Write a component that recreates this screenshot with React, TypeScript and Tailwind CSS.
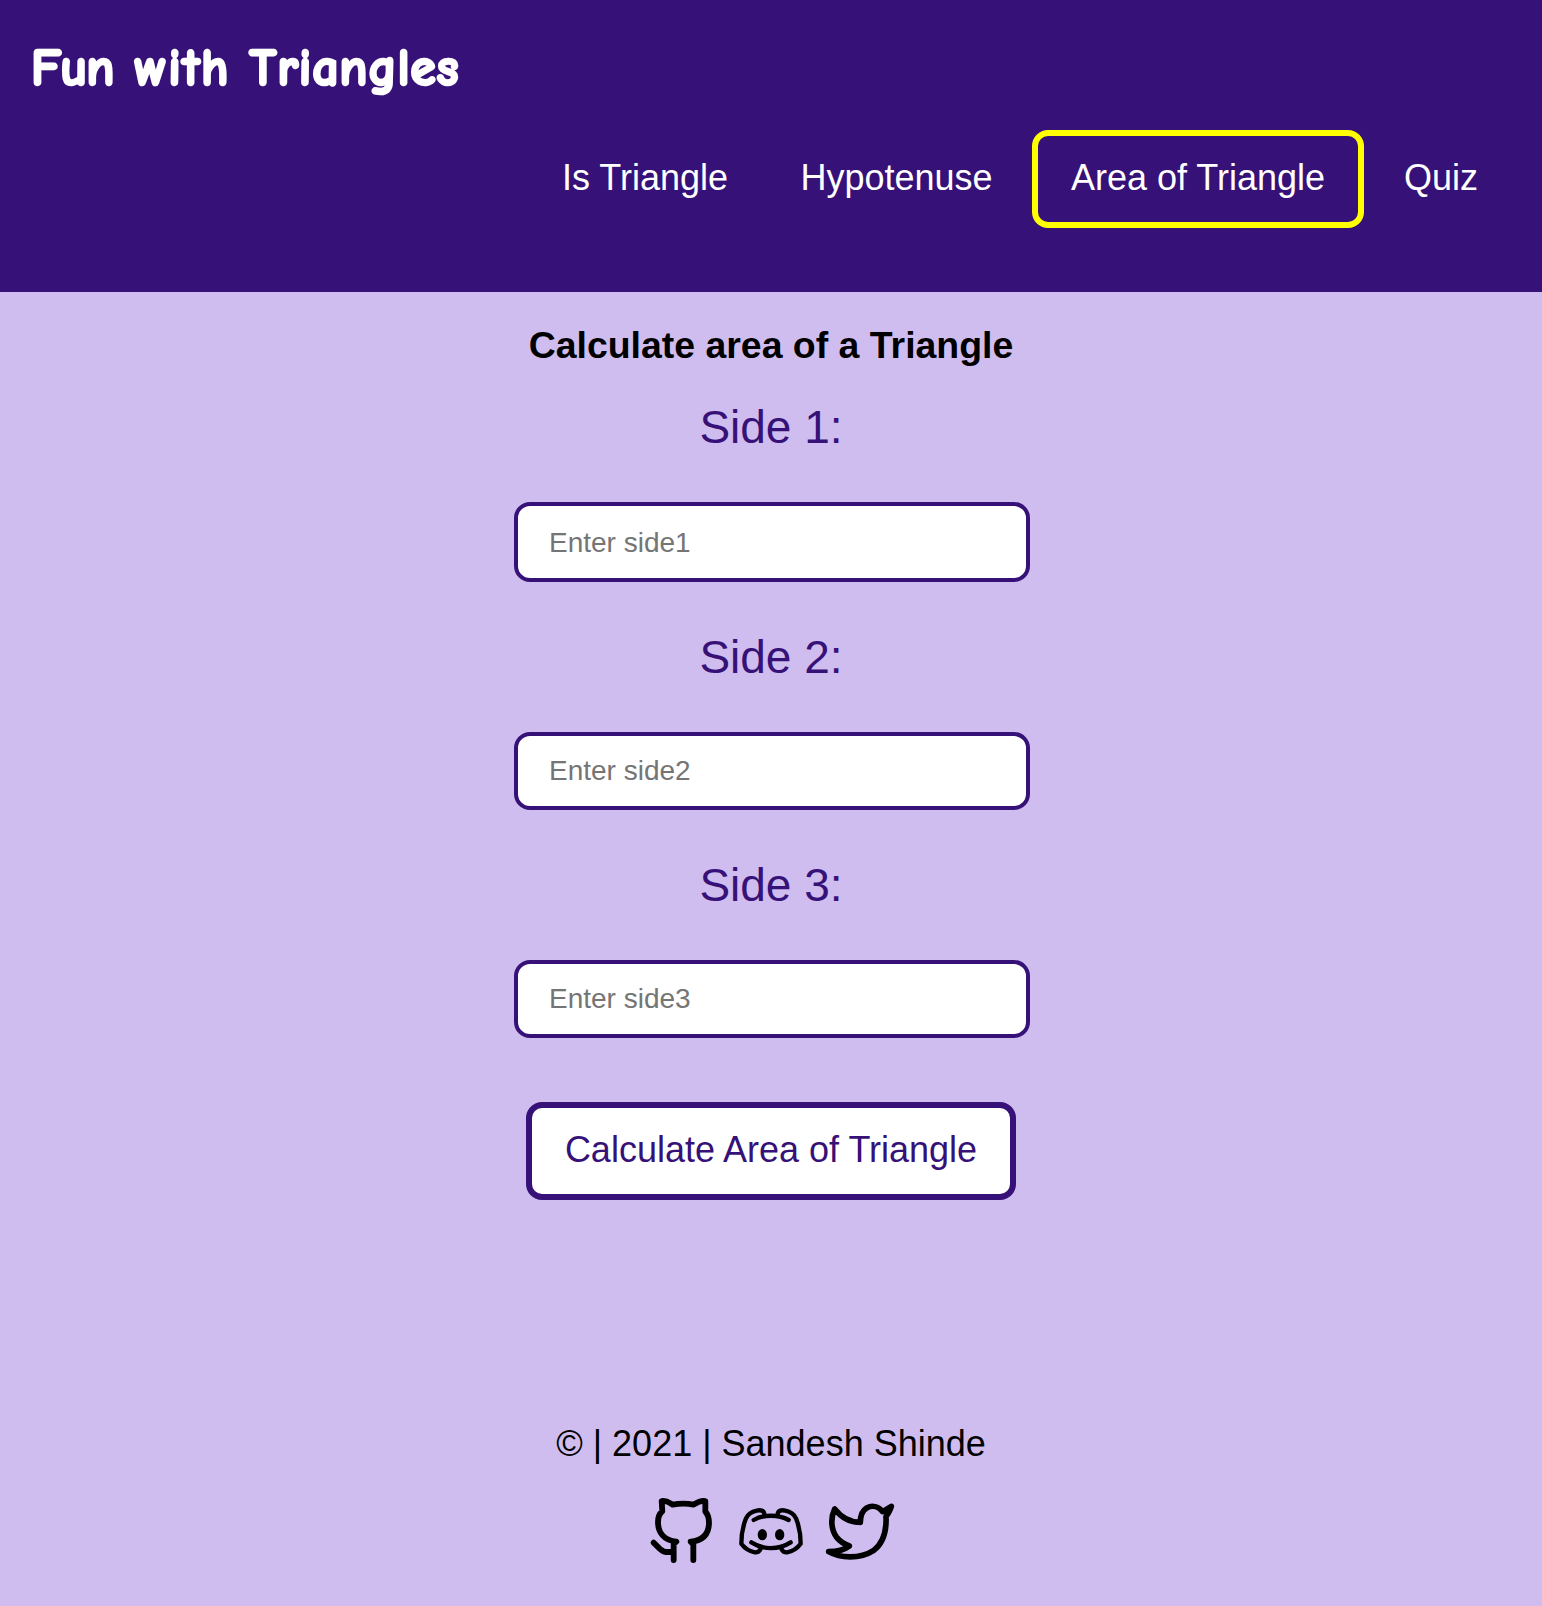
const links = [
  { label: 'Is Triangle', width: 'w-[232px]' },
  { label: 'Hypotenuse', width: 'w-[271px]' },
  { label: 'Area of Triangle', width: 'w-[332px]' },
  { label: 'Quiz', width: 'w-[154px]' },
];

const fields = [
  { n: 1, className: 'h-[80px] mb-[47px] pt-[2px]' },
  { n: 2, className: 'h-[78px] mb-[47px]' },
  { n: 3, className: 'h-[78px] mb-[64px]' },
];

function GithubIcon() {
  return (
    <svg className="h-[70px] w-[66px]" viewBox="30 45 198 210" fill="none" stroke="currentColor" strokeWidth="17.5" strokeLinecap="round" strokeLinejoin="round">
      <path d="M101 240V192L109 185C70 181 54 155 54 126C54 112 60 100 67 94L65 63C80 60 88 68 98 74C118 70 142 70 161 74C170 68 180 60 196 63V95C204 103 207 115 207 130C206 162 188 182 152 185L160 193V240M41 188C55 200 62 215 78 216H98" />
    </svg>
  );
}

function DiscordIcon() {
  return (
    <svg className="mr-[20px] ml-[22px] h-[70px] w-[66px]" viewBox="294 45 198 210" fill="none" stroke="currentColor" strokeWidth="13" strokeLinecap="round" strokeLinejoin="round">
      <path d="M373 102C372 91 361 89 350 92C331 96 323 104 318 115C308 140 304 165 304 191C315 206 329 214 345 217C354 218 359 212 362 206" />
      <path d="M413 102C414 91 425 89 436 92C455 96 463 104 468 115C478 140 482 165 482 191C471 206 457 214 441 217C432 218 427 212 424 206" />
      <path d="M341 120C370 103 416 103 446 120M334 187C370 210 416 210 452 187" />
      <ellipse cx="367" cy="164" rx="14" ry="17" fill="currentColor" stroke="none" />
      <ellipse cx="419" cy="164" rx="14" ry="17" fill="currentColor" stroke="none" />
    </svg>
  );
}

function TwitterIcon() {
  return (
    <svg className="h-[70px] w-[72px]" viewBox="552 45 216 210" fill="none" stroke="currentColor" strokeWidth="17" strokeLinecap="round" strokeLinejoin="round">
      <path d="M754 79L728 95C715 79 696 75 680 84C665 93 661 107 661 127C630 127 605 114 584 87C571 115 573 150 590 172C600 184 612 192 628 198C610 212 590 215 566 215C600 235 660 238 700 212C730 190 740 155 738 110C745 100 751 91 754 79Z" />
    </svg>
  );
}

export default function App() {
  return (
    <div className="flex h-[1606px] w-full flex-col bg-[#d0bdf0] font-['Liberation_Sans',Arial,sans-serif] text-black">
      <header className="h-[292px] shrink-0 bg-[#361178] text-white">
        <div className="h-[130px] pl-[31px] pt-[33px] font-['Comic_Sans_MS','Comic_Neue',cursive] text-[52px] font-bold leading-[70px] tracking-[0.7px] whitespace-pre [-webkit-text-stroke:2.5px_white]">
          <span className="mr-[2px] tracking-[-1px]">Fun</span> <span className="tracking-[1.5px]">with</span> Triangles
        </div>
        <nav className="flex justify-end pr-[24px]">
          {links.map(({ label, width }) => (
            <a
              key={label}
              className={`flex h-[98px] items-center justify-center rounded-[16px] border-[6px] pb-[2px] text-[36px] leading-none whitespace-nowrap ${width} ${
                label === 'Area of Triangle' ? 'border-[#ffff00]' : 'border-transparent'
              }`}
            >
              {label}
            </a>
          ))}
        </nav>
      </header>

      <main className="flex flex-col items-center">
        <h1 className="mt-[32px] mb-[34px] text-[37.44px] font-bold leading-[42px]">Calculate area of a Triangle</h1>
        {fields.map(({ n, className }) => (
          <div key={n} className="flex flex-col items-center">
            <label htmlFor={`side${n}`} className="mb-[48px] text-[46px] leading-[54px] text-[#361178]">
              Side {n}:
            </label>
            <input
              id={`side${n}`}
              placeholder={`Enter side${n}`}
              className={`-mt-px ml-[2px] w-[516px] rounded-[16px] border-[4px] border-[#361178] bg-white px-[31px] text-[28px] placeholder:text-[#757575] first-of-type:mt-0 ${className} ${n < 3 ? 'mb-[48px]' : ''}`}
            />
          </div>
        ))}
        <button className="h-[98px] w-[490px] rounded-[16px] border-[6px] border-[#361178] bg-white pb-[2px] text-[36px] leading-none text-[#361178]">
          Calculate Area of Triangle
        </button>
      </main>

      <footer className="mt-[222px] flex flex-col items-center">
        <p className="text-[36px] leading-[44px]">© | 2021 | Sandesh Shinde</p>
        <div className="mt-[29px] ml-[4px] flex">
          <GithubIcon />
          <DiscordIcon />
          <TwitterIcon />
        </div>
      </footer>
    </div>
  );
}
